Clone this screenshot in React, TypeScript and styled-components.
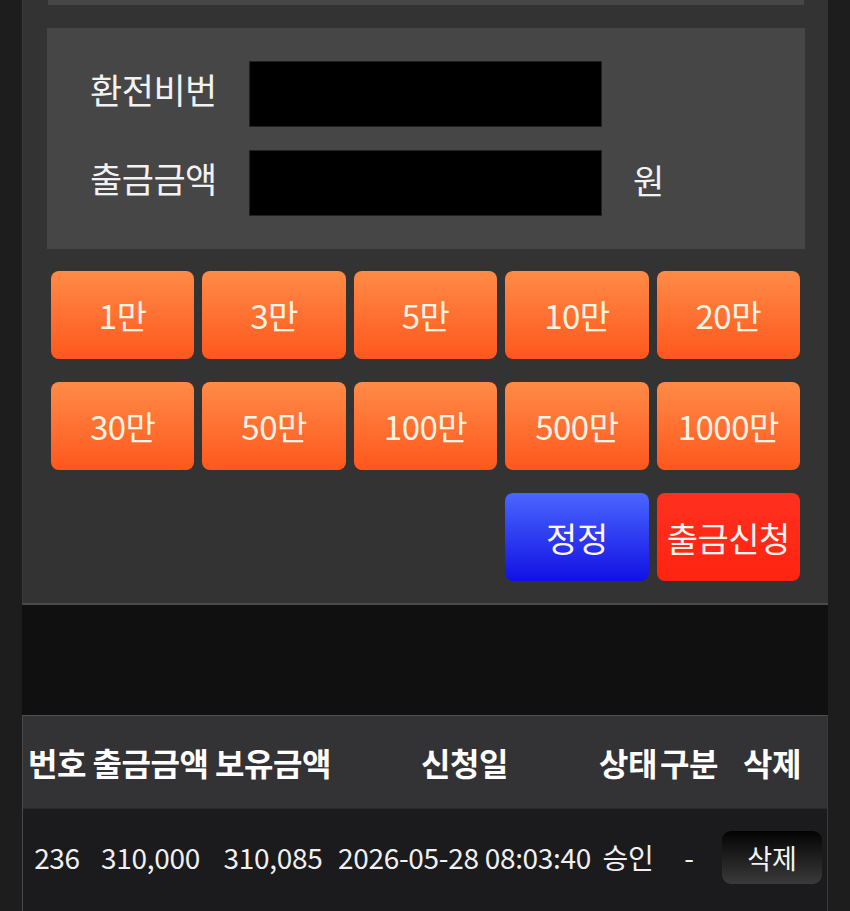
import styled, { createGlobalStyle } from "styled-components";

const GlobalStyle = createGlobalStyle`
  html, body {
    margin: 0;
    padding: 0;
    background: #1d1d1d;
  }
  body {
    font-family: "Noto Sans CJK KR", "Noto Sans", sans-serif;
    color: #f2f2f2;
  }
`;

const amounts = ["1만", "3만", "5만", "10만", "20만", "30만", "50만", "100만", "500만", "1000만"];

const columns = "68px 119px 126px 257px 70px 52px 114px";

const App = () => {
  return (
    <>
      <GlobalStyle />
      <Page>
        <Panel>
          <PrevBox />
          <FormBox>
            <FormRow>
              <Label>환전비번</Label>
              <Input type="password" />
            </FormRow>
            <FormRow>
              <Label>출금금액</Label>
              <Input type="text" />
              <Unit>원</Unit>
            </FormRow>
          </FormBox>
          <AmountGrid>
            {amounts.map((a) => (
              <AmountButton key={a}>{a}</AmountButton>
            ))}
            <Spacer />
            <ActionButton $variant="blue">정정</ActionButton>
            <ActionButton $variant="red">출금신청</ActionButton>
          </AmountGrid>
        </Panel>
        <Gap />
        <Table>
          <HeadRow>
            <HeadCell>번호</HeadCell>
            <HeadCell>출금금액</HeadCell>
            <HeadCell>보유금액</HeadCell>
            <HeadCell>신청일</HeadCell>
            <HeadCell>상태</HeadCell>
            <HeadCell>구분</HeadCell>
            <HeadCell>삭제</HeadCell>
          </HeadRow>
          <BodyRow>
            <Cell>236</Cell>
            <Cell>310,000</Cell>
            <Cell>310,085</Cell>
            <Cell>2026-05-28 08:03:40</Cell>
            <Cell>승인</Cell>
            <Cell>-</Cell>
            <Cell>
              <DeleteButton>삭제</DeleteButton>
            </Cell>
          </BodyRow>
        </Table>
      </Page>
    </>
  );
};

const Page = styled.div`
  width: 806px;
  margin: 0 auto;
  min-height: 911px;
  display: flex;
  flex-direction: column;
`;

const Panel = styled.div`
  background: #333333;
  border-left: 1px solid #3c3c3c;
  border-bottom: 2px solid #4a4a4a;
  padding: 0 0 22px;
  display: flex;
  flex-direction: column;
`;

const PrevBox = styled.div`
  height: 5px;
  margin: 0 24px 0 25px;
  background: #474747;
`;

const FormBox = styled.div`
  margin: 23px 23px 0 24px;
  background: #464646;
  padding: 33px 0;
  display: flex;
  flex-direction: column;
  gap: 23px;
`;

const FormRow = styled.div`
  display: flex;
  align-items: center;
  padding-left: 43px;
`;

const Label = styled.span`
  width: 159px;
  margin-top: -12px;
  font-size: 35px;
  line-height: 1;
  letter-spacing: -0.5px;
  color: #f2f2f2;
`;

const Input = styled.input`
  width: 353px;
  height: 66px;
  box-sizing: border-box;
  background: #000;
  border: 1px solid #222;
  outline: none;
`;

const Unit = styled.span`
  margin-left: 31px;
  margin-top: -6px;
  font-size: 34px;
  line-height: 1;
  color: #f2f2f2;
`;

const AmountGrid = styled.div`
  margin: 22px 28px 0;
  display: grid;
  grid-template-columns: repeat(5, 1fr);
  column-gap: 8px;
  row-gap: 23px;
`;

const AmountButton = styled.button`
  height: 88px;
  border: none;
  border-radius: 8px;
  background: linear-gradient(to bottom, #ff8b47, #ff571d);
  color: #fff4e4;
  font-family: "Noto Sans CJK KR", "Noto Sans", sans-serif;
  font-size: 33px;
  letter-spacing: -0.5px;
  padding: 0;
  white-space: nowrap;
`;

const Spacer = styled.div`
  grid-column: span 3;
`;

const ActionButton = styled.button<{ $variant: "blue" | "red" }>`
  height: 88px;
  border: none;
  border-radius: 8px;
  background: ${(p) =>
    p.$variant === "blue"
      ? "linear-gradient(to bottom, #4a66ff, #1111e4)"
      : "linear-gradient(to bottom, #ff3020, #ff2410)"};
  color: #fff4ee;
  font-family: "Noto Sans CJK KR", "Noto Sans", sans-serif;
  font-size: 34px;
  letter-spacing: -0.5px;
  padding: 0;
  white-space: nowrap;
`;

const Gap = styled.div`
  height: 110px;
  background: #111011;
`;

const Table = styled.div`
  flex: 1;
  border-top: 1px solid #4e4e4e;
  border-left: 1px solid #4a4a4a;
  border-right: 1px solid #3a3a3a;
  background: #1b1a1c;
`;

const HeadRow = styled.div`
  display: grid;
  grid-template-columns: ${columns};
  height: 92px;
  align-items: center;
  background: #333234;
  border-bottom: 1px solid #2a2a2a;
`;

const HeadCell = styled.div`
  display: flex;
  justify-content: center;
  font-size: 32px;
  font-weight: 700;
  letter-spacing: -0.5px;
  color: #ffffff;
  white-space: nowrap;
`;

const BodyRow = styled.div`
  display: grid;
  grid-template-columns: ${columns};
  height: 96px;
  align-items: center;
`;

const Cell = styled.div`
  display: flex;
  justify-content: center;
  font-size: 28px;
  color: #f0f0f0;
  white-space: nowrap;
  letter-spacing: -0.3px;
`;

const DeleteButton = styled.button`
  width: 100px;
  height: 53px;
  border: none;
  border-radius: 9px;
  background: linear-gradient(to bottom, #030303, #3a3a3a);
  color: #f4f4f4;
  font-family: "Noto Sans CJK KR", "Noto Sans", sans-serif;
  font-size: 27px;
  padding: 0;
`;

export default App;
